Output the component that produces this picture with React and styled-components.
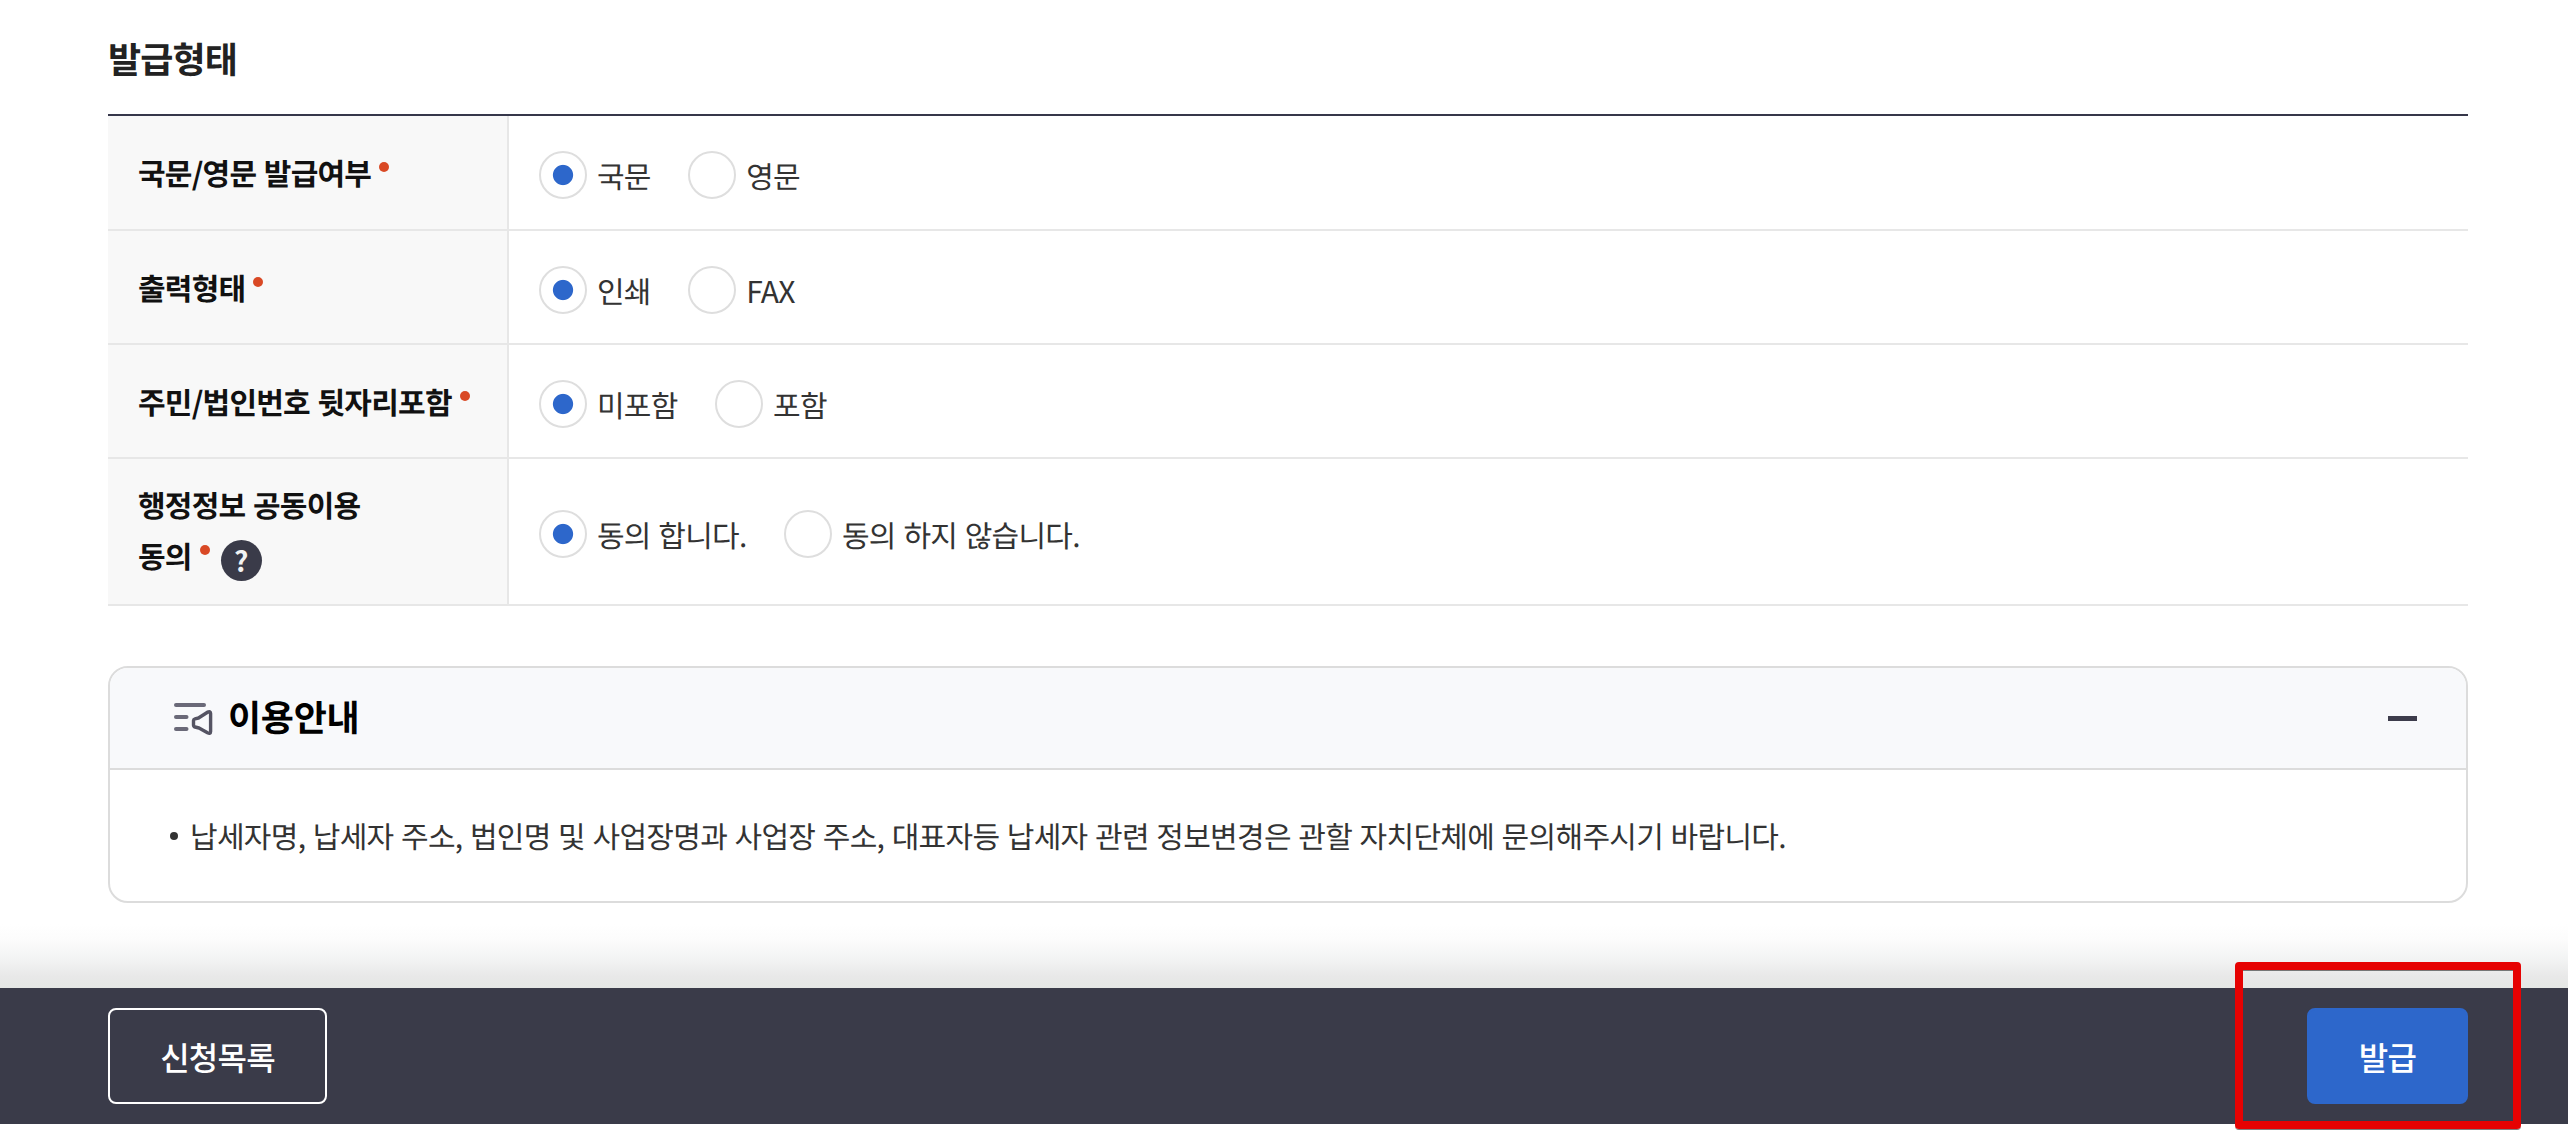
import React, { useState } from "react";
import styled, { createGlobalStyle } from "styled-components";

const rows = [
  {
    id: "lang",
    label: ["국문/영문 발급여부"],
    options: ["국문", "영문"],
    height: 115,
  },
  {
    id: "output",
    label: ["출력형태"],
    options: ["인쇄", "FAX"],
    height: 114,
  },
  {
    id: "number",
    label: ["주민/법인번호 뒷자리포함"],
    options: ["미포함", "포함"],
    height: 114,
  },
  {
    id: "agree",
    label: ["행정정보 공동이용", "동의"],
    options: ["동의 합니다.", "동의 하지 않습니다."],
    height: 147,
    help: true,
  },
];

const NoticeIcon = () => (
  <svg width="40" height="36" viewBox="0 0 40 36" fill="none">
    <g stroke="#6a6978" strokeWidth="4" strokeLinecap="round">
      <path d="M3 5H31" />
      <path d="M3 17H13.5" />
      <path d="M3 29H13.5" />
    </g>
    <path
      d="M22 18.8L25.5 18L34.5 12.2Q37.6 11 37.6 13.5V31.5Q37.6 34.2 34.5 32.8L26 28L22 27Q20.5 26.6 20.5 25V20.5Q20.5 19.2 22 18.8Z"
      stroke="#555463"
      strokeWidth="3.4"
      strokeLinejoin="round"
    />
  </svg>
);

const App = () => {
  const [values, setValues] = useState({
    lang: 0,
    output: 0,
    number: 0,
    agree: 0,
  });

  return (
    <Page>
      <GlobalStyle />
      <Content>
        <SectionTitle>발급형태</SectionTitle>
        <Table>
          {rows.map((row) => {
            const { id, label, options, height, help } = row;
            return (
              <Row key={id} $height={height}>
                <HeadCell $lines={label.length}>
                  {label.map((line, index) => (
                    <LabelLine key={line}>
                      {line}
                      {index === label.length - 1 && <Required />}
                      {help && index === label.length - 1 && (
                        <HelpButton type="button">?</HelpButton>
                      )}
                    </LabelLine>
                  ))}
                </HeadCell>
                <DataCell>
                  {options.map((option, index) => (
                    <Option key={option}>
                      <Radio
                        type="radio"
                        name={id}
                        checked={values[id] === index}
                        onChange={() => setValues({ ...values, [id]: index })}
                      />
                      <span>{option}</span>
                    </Option>
                  ))}
                </DataCell>
              </Row>
            );
          })}
        </Table>
        <Notice>
          <NoticeHeader>
            <NoticeIcon />
            <h3>이용안내</h3>
            <CollapseMark />
          </NoticeHeader>
          <NoticeList>
            <li>
              납세자명, 납세자 주소, 법인명 및 사업장명과 사업장 주소, 대표자등
              납세자 관련 정보변경은 관할 자치단체에 문의해주시기 바랍니다.
            </li>
          </NoticeList>
        </Notice>
      </Content>
      <Fade />
      <BottomBar>
        <BarButton type="button" $width={219}>
          신청목록
        </BarButton>
        <IssueWrap>
          <BarButton type="button" $width={161} $primary>
            발급
          </BarButton>
          <Highlight />
        </IssueWrap>
      </BottomBar>
    </Page>
  );
};

const GlobalStyle = createGlobalStyle`
  * {
    box-sizing: border-box;
  }

  body {
    margin: 0;
    background: #fff;
    font-family: "Noto Sans CJK KR", sans-serif;
    letter-spacing: -0.25px;
    text-rendering: geometricPrecision;
    overflow: hidden;
  }

  h2, h3, ul {
    margin: 0;
    padding: 0;
  }
`;

const Page = styled.div`
  height: 1133px;
  display: flex;
  flex-direction: column;
`;

const Content = styled.main`
  height: 924px;
  padding: 0 100px 0 108px;
`;

const SectionTitle = styled.h2`
  height: 114px;
  padding-top: 32px;
  font-size: 36px;
  line-height: 52px;
  font-weight: 700;
  letter-spacing: -0.9px;
  color: #222;
`;

const Table = styled.div`
  border-top: 2px solid #36374a;
`;

const Row = styled.div`
  display: flex;
  height: ${(props) => props.$height}px;
  border-bottom: 2px solid #e7e7e7;
`;

const HeadCell = styled.div`
  width: 401px;
  padding: 0 0 ${(props) => (props.$lines > 1 ? 4 : 0)}px 30px;
  display: flex;
  flex-direction: column;
  justify-content: center;
  background: #f8f8f8;
  border-right: 2px solid #e7e7e7;
`;

const LabelLine = styled.div`
  display: flex;
  height: 51px;
  font-size: 30px;
  line-height: 51px;
  font-weight: 700;
  letter-spacing: -0.75px;
  word-spacing: 1.5px;
  color: #111;
  white-space: nowrap;
`;

const Required = styled.i`
  width: 10px;
  height: 10px;
  margin: 15px 0 0 8px;
  border-radius: 50%;
  background: #d94925;
`;

const HelpButton = styled.button`
  width: 41px;
  height: 41px;
  margin: 10px 0 0 11px;
  padding: 0;
  border: 0;
  border-radius: 50%;
  background: #3a3b49;
  color: #f3f3f3;
  font-family: "Noto Sans CJK KR", sans-serif;
  font-size: 28px;
  line-height: 41px;
  font-weight: 700;
`;

const DataCell = styled.div`
  flex: 1;
  display: flex;
  align-items: center;
  gap: 37.5px;
  padding: 5px 0 0 30px;
`;

const Option = styled.label`
  display: flex;
  align-items: center;
  font-size: 30px;
  line-height: 46px;
  letter-spacing: -0.75px;
  word-spacing: 1.7px;
  color: #333;

  span {
    margin-left: 10px;
  }
`;

const Radio = styled.input`
  appearance: none;
  width: 48px;
  height: 48px;
  margin: 0;
  border: 2px solid #dedede;
  border-radius: 50%;
  background: #fff;

  &:checked {
    background: radial-gradient(circle, #2d67cb 9.6px, #fff 10.6px);
  }
`;

const Notice = styled.section`
  height: 237px;
  margin-top: 60px;
  border: 2px solid #dcdcdc;
  border-radius: 20px;
  overflow: hidden;
`;

const NoticeHeader = styled.div`
  height: 102px;
  padding: 0 49px 0 63px;
  display: flex;
  align-items: center;
  background: #f8f9fb;
  border-bottom: 2px solid #dcdcdc;

  h3 {
    margin-left: 15px;
    padding-bottom: 5px;
    font-size: 36px;
    line-height: 52px;
    font-weight: 700;
    color: #000;
  }
`;

const CollapseMark = styled.span`
  width: 29px;
  height: 5px;
  margin-left: auto;
  background: #3d3c4b;
`;

const NoticeList = styled.ul`
  padding: 40px 0 0 60px;
  list-style: none;

  li {
    display: flex;
    align-items: center;
    font-size: 30px;
    line-height: 51px;
    letter-spacing: -0.68px;
    word-spacing: 1.4px;
    color: #333;
  }

  li::before {
    content: "";
    width: 8px;
    height: 8px;
    margin-right: 12px;
    border-radius: 50%;
    background: #333;
  }
`;

const Fade = styled.div`
  height: 64px;
  background: linear-gradient(#fff 0%, #fcfcfc 24%, #f2f3f3 56%, #e8e8e8 82%, #e5e7e5 100%);
`;

const BottomBar = styled.footer`
  height: 136px;
  padding: 0 100px 0 108px;
  display: flex;
  align-items: center;
  justify-content: space-between;
  background: #3a3b49;
`;

const BarButton = styled.button`
  width: ${(props) => props.$width}px;
  height: 96px;
  padding: 0;
  border: 2px solid ${(props) => (props.$primary ? "#2d67cb" : "#fff")};
  border-radius: 8px;
  background: ${(props) => (props.$primary ? "#2d67cb" : "transparent")};
  color: #fff;
  font-family: "Noto Sans CJK KR", sans-serif;
  font-size: 32px;
  font-weight: 500;
  line-height: 48px;
  letter-spacing: -0.025em;
`;

const IssueWrap = styled.div`
  position: relative;
  display: flex;
`;

/* red frame drawn over the issue button */
const Highlight = styled.div`
  position: absolute;
  top: -46px;
  left: -72px;
  width: 286px;
  height: 167px;
  border: 8px solid #e60202;
  border-radius: 4px;
  box-shadow: 0 1px 0 rgba(0, 0, 0, 0.5), inset 0 1px 0 rgba(0, 0, 0, 0.5);
  pointer-events: none;
`;

export default App;
